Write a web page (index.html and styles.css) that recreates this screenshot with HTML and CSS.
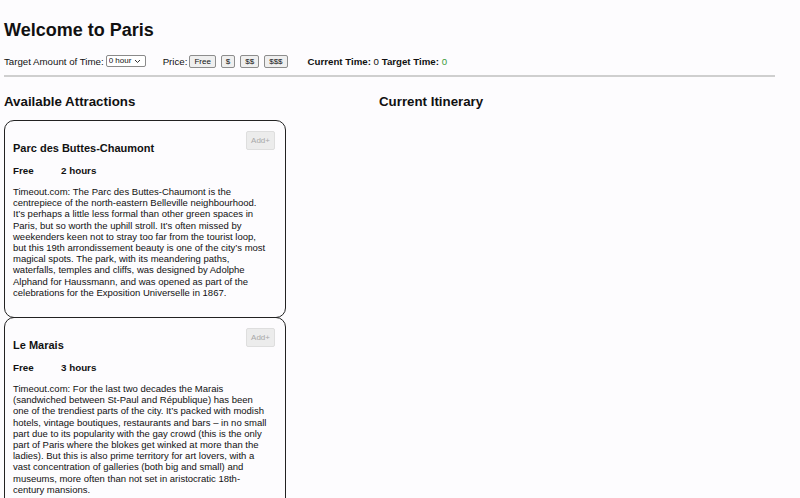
FILE: index.html
```html
<!DOCTYPE html>
<html lang="en">
<head>
  <meta charset="UTF-8">
  <meta name="viewport" content="width=device-width, initial-scale=1.0">
  <title>Paris Planner</title>
  <link rel="stylesheet" href="styles.css">
</head>
<body>
  <div class="app">
    <h1 class="title">Welcome to Paris</h1>
    <div class="toolbar">
      <label class="target">Target Amount of Time:
        <select class="sel-time">
          <option>0 hour</option>
        </select>
      </label>
      <div class="price">Price:
        <button class="btn-price">Free</button>
        <button class="btn-price">$</button>
        <button class="btn-price">$$</button>
        <button class="btn-price">$$$</button>
      </div>
      <p class="times"><b>Current Time:</b> 0 <b>Target Time:</b> <span class="ok">0</span></p>
    </div>
    <hr class="divider">
    <div class="columns">
      <section class="col">
        <h2 class="col-title">Available Attractions</h2>
        <div class="card">
          <button class="btn-add" disabled>Add+</button>
          <h3 class="card-name">Parc des Buttes-Chaumont</h3>
          <p class="card-meta"><span class="cost">Free</span><span>2 hours</span></p>
          <p class="card-desc">Timeout.com: The Parc des Buttes-Chaumont is the centrepiece of the north-eastern Belleville neighbourhood. It’s perhaps a little less formal than other green spaces in Paris, but so worth the uphill stroll. It’s often missed by weekenders keen not to stray too far from the tourist loop, but this 19th arrondissement beauty is one of the city’s most magical spots. The park, with its meandering paths, waterfalls, temples and cliffs, was designed by Adolphe Alphand for Haussmann, and was opened as part of the celebrations for the Exposition Universelle in 1867.</p>
        </div>
        <div class="card">
          <button class="btn-add" disabled>Add+</button>
          <h3 class="card-name">Le Marais</h3>
          <p class="card-meta"><span class="cost">Free</span><span>3 hours</span></p>
          <p class="card-desc">Timeout.com: For the last two decades the Marais (sandwiched between St-Paul and République) has been one of the trendiest parts of the city. It’s packed with modish hotels, vintage boutiques, restaurants and bars – in no small part due to its popularity with the gay crowd (this is the only part of Paris where the blokes get winked at more than the ladies). But this is also prime territory for art lovers, with a vast concentration of galleries (both big and small) and museums, more often than not set in aristocratic 18th-century mansions.</p>
        </div>
      </section>
      <section class="col">
        <h2 class="col-title">Current Itinerary</h2>
      </section>
    </div>
  </div>
</body>
</html>
```

FILE: styles.css
```css
* {
  box-sizing: border-box;
}
body {
  margin: 0;
  background-color: #fdfcfe;
  color: #111;
  font-family: "Liberation Sans", Arial, sans-serif;
}
.app {
  padding: 0 25px 0 4px;
}
.title {
  margin: 0;
  padding-top: 20px;
  font-size: 18px;
  line-height: 20px;
}
.toolbar {
  display: flex;
  align-items: center;
  margin-top: 13px;
  font-size: 9.7px;
  height: 16px;
}
.target {
  display: flex;
  align-items: center;
  gap: 2px;
}
/* 화살표는 svg 로 직접 그림 */
.sel-time {
  appearance: none;
  width: 40px;
  height: 12px;
  padding: 0 0 0 2px;
  font-family: inherit;
  font-size: 8px;
  line-height: 10px;
  color: #111;
  border: 1px solid #8a8a8a;
  border-radius: 2px;
  background: #fff url("data:image/svg+xml,%3Csvg xmlns='http://www.w3.org/2000/svg' width='7' height='5'%3E%3Cpath d='M1 1l2.5 2.5L6 1' fill='none' stroke='%23333' stroke-width='1'/%3E%3C/svg%3E") no-repeat right 4px center;
}
.price {
  display: flex;
  align-items: center;
  margin-left: 17px;
}
.btn-price {
  height: 13px;
  margin-left: 5px;
  padding: 0 4px;
  font-family: inherit;
  font-size: 8px;
  line-height: 11px;
  color: #111;
  border: 1px solid #8d8d8d;
  border-radius: 2px;
  background-color: #efefef;
}
.btn-price:first-child {
  margin-left: 2px;
}
.times {
  margin: 0 0 0 20px;
}
.ok {
  color: #3a9a3a;
}
.divider {
  margin: 6px 0 0;
  border: none;
  border-top: 2px solid #cfcfcf;
}
.columns {
  display: grid;
  grid-template-columns: 375px 1fr;
}
.col-title {
  margin: 17px 0 10px;
  font-size: 13.3px;
  line-height: 16px;
}
.card {
  width: 282px;
  padding: 10px 10px 19px 8px;
  border: 1px solid #222;
  border-radius: 10px;
  margin-bottom: -1px;
}
.btn-add {
  float: right;
  width: 29px;
  height: 19px;
  padding: 0;
  font-family: inherit;
  font-size: 8px;
  color: #a8a8a8;
  border: 1px solid #dedede;
  border-radius: 2px;
  background-color: #ececec;
}
.card-name {
  margin: 0;
  padding-top: 11px;
  font-size: 11px;
  line-height: 13px;
}
.card-meta {
  margin: 10px 0 0;
  font-size: 9.8px;
  font-weight: bold;
  line-height: 12px;
}
.cost {
  display: inline-block;
  width: 48px;
}
.card-desc {
  margin: 9px 5px 0 0;
  font-size: 9.5px;
  line-height: 11.2px;
}
```
